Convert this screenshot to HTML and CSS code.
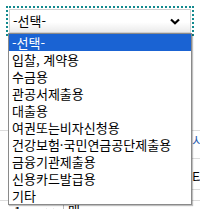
FILE: index.html
```html
<!DOCTYPE html>
<html lang="ko">
<head>
<meta charset="UTF-8">
<title>용도 선택</title>
<link rel="stylesheet" href="styles.css">
</head>
<body>
<div class="page">
  <div class="pick">
    <div class="sel focus">
      <span>-선택-</span>
      <svg class="chev" width="10" height="7" viewBox="0 0 10 7"><polyline points="1,1.5 5,5.2 9,1.5" fill="none" stroke="#000" stroke-width="2.2"/></svg>
    </div>
    <ul class="menu">
      <li class="on">-선택-</li>
      <li>입찰, 계약용</li>
      <li>수금용</li>
      <li>관공서제출용</li>
      <li>대출용</li>
      <li>여권또는비자신청용</li>
      <li>건강보험·국민연금공단제출용</li>
      <li>금융기관제출용</li>
      <li>신용카드발급용</li>
      <li>기타</li>
    </ul>
  </div>

  <div class="sheet">
    <div class="row top"></div>
    <div class="row split"><div class="cl"></div><div class="cr link">시</div></div>
    <div class="row split tall"><div class="cl"></div><div class="cr">티</div></div>
    <div class="row thin"></div>
    <div class="row qty">
      <div class="mini"><span>1</span><svg width="10" height="7" viewBox="0 0 10 7"><polyline points="1,1.5 5,5.2 9,1.5" fill="none" stroke="#000" stroke-width="2.2"/></svg></div>
      <span class="unit">매</span>
    </div>
  </div>
</div>
</body>
</html>
```

FILE: styles.css
```css
body {margin:0;background:#fff;font-family:'Noto Sans CJK KR','Malgun Gothic',sans-serif;font-size:13px;color:#000;}
.page {width:200px;height:209px;overflow:hidden;position:relative;}
.pick {padding:9px 9px 0 9px;height:24px;}
.sel {display:flex;align-items:center;justify-content:space-between;height:22px;padding:0 10px 0 3px;border:1px solid #cfcfcf;background:linear-gradient(#fff 55%,#ebebeb);box-sizing:content-box;}
.sel span {line-height:22px;}
.sel.focus {outline:2px dotted #12898d;outline-offset:1px;}
.chev {margin-top:1px;}
.menu {position:absolute;top:33px;left:8px;width:182px;margin:0;padding:0;list-style:none;background:#fff;border:1px solid #8a8a8a;box-shadow:1px 1px 1px rgba(0,0,0,.25);z-index:2;}
.menu li {height:17px;line-height:17px;padding-left:3px;white-space:nowrap;}
.menu li.on {background:#1a63d3;color:#fff;}
.sheet {display:flex;flex-direction:column;}
.row {border-bottom:1px solid #dcdcdc;}
.row.top {height:97px;}
.row.split {display:flex;border-bottom:none;height:28px;}
.row.split.tall {height:31px;}
.row.split .cl {flex:1;}
.row.split .cr {width:8px;padding-left:2px;border-bottom:1px solid #dcdcdc;overflow:hidden;white-space:nowrap;line-height:30px;}
.row.split.tall .cr {line-height:36px;}
.cr.link {color:#2a5db0;line-height:18px !important;}
.row.thin {height:10px;}
.row.qty {display:flex;align-items:flex-start;border-bottom:none;padding-left:14px;height:20px;}
.mini {display:flex;align-items:center;gap:24px;width:44px;padding-right:5px;border-right:1px solid #bbb;height:20px;line-height:16px;}
.mini span {margin-top:2px;}
.unit {padding-left:4px;line-height:16px;margin-top:1px;}
```
